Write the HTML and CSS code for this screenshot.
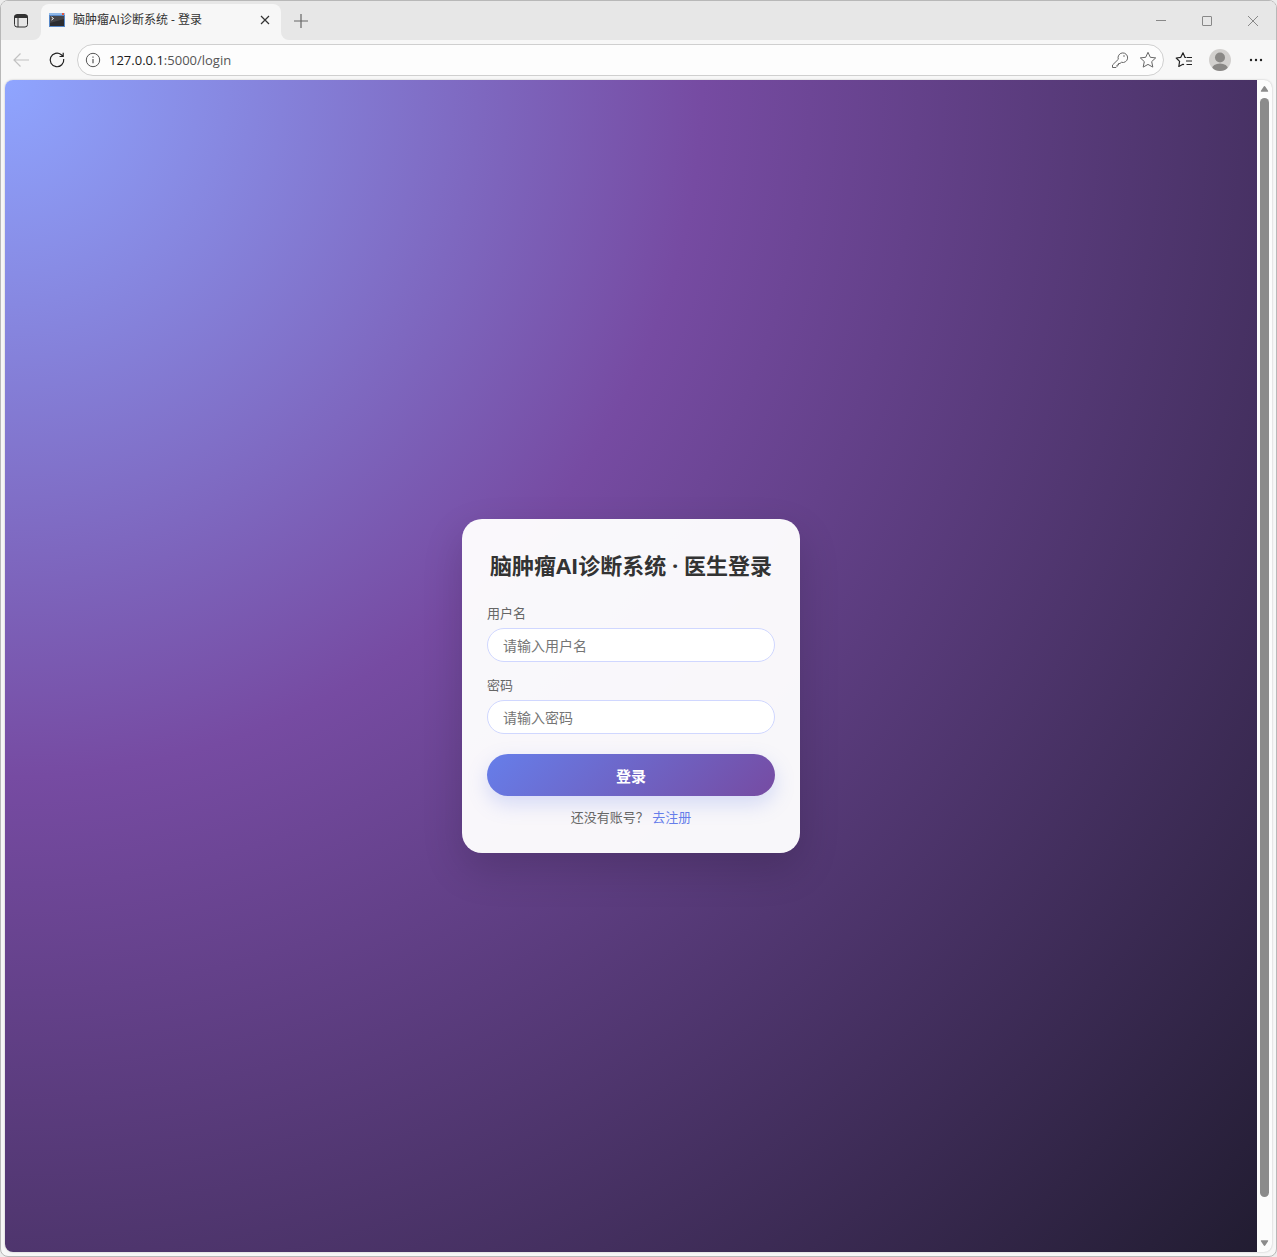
FILE: index.html
```html
<!DOCTYPE html>
<html lang="zh-CN">
<head>
<meta charset="utf-8">
<meta name="viewport" content="width=device-width, initial-scale=1">
<title>脑肿瘤AI诊断系统 - 登录</title>
<link rel="stylesheet" href="styles.css">
</head>
<body>
<div class="window">
  <header class="tabs">
    <button class="icon-btn tab-actions" type="button" aria-label="标签页操作">
      <svg width="16" height="16" viewBox="0 0 16 16" fill="none" stroke="#333"><rect x="1.5" y="1.5" width="13" height="12.5" rx="2.5"/><path d="M2 2.5h12v2H2z" fill="#333"/><path d="M5 5v9"/></svg>
    </button>
    <div class="tab">
      <svg width="16" height="16" viewBox="0 0 16 16"><path fill="#5788c8" d="M0 1h16v14H0z"/><path fill="#8fb8e8" d="M0 1h16v2H0z"/><path fill="#2d2d30" d="M1 4h14v10H1z"/><path fill="#464649" d="M1 4h14v3L1 11z"/><path fill="#e3573f" d="M13 1h2v2h-2z"/><path d="M2.500 5 4.500 6.500 2.500 8" fill="none" stroke="#fff"/></svg>
      <span class="tab-title">脑肿瘤AI诊断系统 - 登录</span>
      <button class="icon-btn" type="button" aria-label="关闭标签页">
        <svg width="16" height="16" viewBox="0 0 16 16" fill="none" stroke="#333" stroke-width="1.2"><path d="m4 4 8 8M12 4l-8 8"/></svg>
      </button>
    </div>
    <div class="strip">
      <button class="icon-btn new-tab" type="button" aria-label="新建标签页">
        <svg width="16" height="16" viewBox="0 0 16 16" fill="none" stroke="#666" stroke-width="1.2"><path d="M8 1v14M1 8h14"/></svg>
      </button>
      <div class="controls">
        <button class="icon-btn" type="button" aria-label="最小化"><svg width="12" height="12" viewBox="0 0 12 12" fill="none" stroke="#888"><path d="M1 5.500h10"/></svg></button>
        <button class="icon-btn" type="button" aria-label="最大化"><svg width="12" height="12" viewBox="0 0 12 12" fill="none" stroke="#888"><rect x="1.500" y="1.500" width="9" height="9" rx=".5"/></svg></button>
        <button class="icon-btn" type="button" aria-label="关闭"><svg width="12" height="12" viewBox="0 0 12 12" fill="none" stroke="#888"><path d="m1 1 10 10M11 1 1 11"/></svg></button>
      </div>
    </div>
  </header>
  <nav class="toolbar">
    <button class="icon-btn nav-btn" type="button" aria-label="后退" disabled>
      <svg width="18" height="18" viewBox="0 0 18 18" fill="none" stroke="#c2c2c2" stroke-width="1.2"><path d="M17 9H2M8.500 2.500 2 9l6.500 6.500"/></svg>
    </button>
    <button class="icon-btn nav-btn" type="button" aria-label="刷新">
      <svg width="18" height="18" viewBox="0 0 18 18" fill="none" stroke="#222" stroke-width="1.200"><path d="M15.700 8A6.800 6.800 0 1 1 13.300 3.700L15 5.300M15.200 1.800v3.700h-3.700"/></svg>
    </button>
    <div class="address">
      <svg width="16" height="16" viewBox="0 0 16 16" fill="none" stroke="#555"><circle cx="8" cy="8" r="6.700"/><path d="M8 7v4.300M8 4.500v1.300" stroke-width="1.200"/></svg>
      <span class="url"><span class="host">127.0.0.1</span>:5000/login</span>
      <button class="icon-btn" type="button" aria-label="密码">
        <svg width="18" height="18" viewBox="0 0 18 18" fill="none" stroke="#666" stroke-linejoin="round"><path d="M7.300 8.300a4.800 4.800 0 1 1 3.100 3L9 12.500H7.500V14H6v1.500L5 16.500H1.500V14z"/><circle cx="13" cy="5" r=".8" fill="#666" stroke="none"/></svg>
      </button>
      <button class="icon-btn" type="button" aria-label="收藏">
        <svg width="18" height="18" viewBox="0 0 18 18" fill="none" stroke="#666" stroke-linejoin="round"><path d="m9 1.300 2.300 5 5.400.6-4 3.700 1.100 5.500L9 13.400l-4.800 2.700 1.100-5.500-4-3.700 5.400-.6z"/></svg>
      </button>
    </div>
    <button class="icon-btn nav-btn" type="button" aria-label="收藏夹">
      <svg width="18" height="18" viewBox="0 0 18 18" fill="none" stroke="#222" stroke-width="1.200" stroke-linejoin="round"><path d="M11 6.500H10L8 1.800 5.800 6.300l-4.600.7 3.400 3.400L3.800 15.500l4.200-2.300 1 .6M11.500 6.500h5.500M11 10h6M11.500 13.500H17"/></svg>
    </button>
    <button class="icon-btn nav-btn" type="button" aria-label="个人资料">
      <svg width="24" height="24" viewBox="0 0 24 24"><defs><clipPath id="face"><circle cx="12" cy="12" r="11"/></clipPath></defs><circle cx="12" cy="12" r="11" fill="#d2d0ce"/><g clip-path="url(#face)" fill="#8a8886"><circle cx="12" cy="9.500" r="5"/><ellipse cx="12" cy="21" rx="8" ry="5.500"/></g></svg>
    </button>
    <button class="icon-btn nav-btn" type="button" aria-label="设置及其他">
      <svg width="16" height="16" viewBox="0 0 16 16" fill="#222"><circle cx="3" cy="8" r="1.200"/><circle cx="8" cy="8" r="1.200"/><circle cx="13" cy="8" r="1.200"/></svg>
    </button>
  </nav>
  <div class="viewport">
    <main class="page">
      <form class="card">
        <h1 class="title">脑肿瘤AI诊断系统 · 医生登录</h1>
        <div class="field">
          <label class="label" for="username">用户名</label>
          <input class="input" id="username" type="text" placeholder="请输入用户名">
        </div>
        <div class="field">
          <label class="label" for="password">密码</label>
          <input class="input" id="password" type="password" placeholder="请输入密码">
        </div>
        <button class="submit" type="submit">登录</button>
        <p class="hint">还没有账号？ <a class="link" href="/register">去注册</a></p>
      </form>
    </main>
    <div class="scrollbar">
      <svg width="9" height="8" viewBox="0 0 10 8" fill="#8b8b8b"><path d="M4 1.500Q5 0 6 1.500L9 6Q9.500 7 8.500 7h-7Q.5 7 1 6z"/></svg>
      <div class="track"><div class="thumb"></div></div>
      <svg width="9" height="8" viewBox="0 0 10 8" fill="#8b8b8b"><path d="M4 6.500Q5 8 6 6.500L9 2Q9.500 1 8.500 1h-7Q.5 1 1 2z"/></svg>
    </div>
  </div>
</div>
</body>
</html>
```

FILE: styles.css
```css
* {
  box-sizing: border-box;
}

body {
  margin: 0;
  background: #ececec;
  font-family: "Open Sans", "Noto Sans CJK SC", sans-serif;
}

.window {
  display: flex;
  flex-direction: column;
  height: 100vh;
  border: 1px solid #b8b8b8;
  border-radius: 8px;
  background: #f7f7f7;
  overflow: hidden;
}

.icon-btn {
  display: flex;
  align-items: center;
  justify-content: center;
  padding: 0;
  border: 0;
  background: none;
}

/* Tab strip */
.tabs {
  display: flex;
  flex: none;
  height: 39px;
  background: linear-gradient(#e7e7e7 50%, #f7f7f7 50%);
}

.tab-actions,
.new-tab {
  width: 40px;
}

.tab-actions {
  background: #e7e7e7;
  border-bottom-right-radius: 8px;
}

.strip {
  display: flex;
  flex: 1;
  border-bottom-left-radius: 8px;
  background: #e7e7e7;
}

.tab {
  display: flex;
  align-items: center;
  gap: 8px;
  width: 240px;
  margin-top: 3px;
  padding: 0 8px 4px;
  border-radius: 8px 8px 0 0;
  background: #f7f7f7;
}

.tab-title {
  flex: 1;
  color: #333;
  font-size: 12px;
  line-height: 16px;
  white-space: nowrap;
}

.controls {
  display: flex;
  margin-left: auto;
}

.controls .icon-btn {
  width: 46px;
}

/* Navigation bar */
.toolbar {
  display: flex;
  flex: none;
  align-items: center;
  height: 40px;
  padding: 0 2px;
}

.nav-btn {
  width: 36px;
  height: 32px;
}

.address {
  display: flex;
  flex: 1;
  align-items: center;
  gap: 8px;
  height: 32px;
  margin: 0 2px;
  padding: 0 5px 0 7px;
  border: 1px solid #cfcfcf;
  border-radius: 16px;
  background: #fdfdfd;
}

.address .icon-btn {
  width: 20px;
}

.url {
  flex: 1;
  color: #555;
  font-size: 13px;
  line-height: 20px;
}

.host {
  color: #1b1b1b;
}

/* Web page area */
.viewport {
  display: flex;
  flex: 1;
  min-height: 0;
  margin: 0 4px 4px;
  border-radius: 8px;
  background: #fcfcfc;
  box-shadow: 0 0 2px rgba(0, 0, 0, 0.25);
  overflow: hidden;
}

.page {
  display: flex;
  flex: 1;
  align-items: center;
  justify-content: center;
  height: calc(100% + 40px);
  background: radial-gradient(circle at top left, #8fa5ff 0, #764ba2 40%, #1f1b2e 100%);
}

.scrollbar {
  display: flex;
  flex: none;
  flex-direction: column;
  align-items: center;
  width: 15px;
  padding: 5px 0;
}

.track {
  flex: 1;
  width: 9px;
  padding: 5px 0;
}

.thumb {
  height: 96.7%;
  border-radius: 5px;
  background: #8b8b8b;
}

/* Login card */
.card {
  width: 338px;
  padding: 31px 25px 26px;
  border-radius: 20px;
  background: rgba(255, 255, 255, 0.96);
  box-shadow: 0 16px 40px rgba(0, 0, 0, 0.16);
}

.title {
  margin: 0 0 24px;
  color: #333;
  font-size: 22px;
  line-height: 30px;
  text-align: center;
  white-space: nowrap;
}

.field {
  margin-bottom: 14px;
}

.label {
  display: block;
  margin-bottom: 6px;
  color: #666;
  font-size: 13px;
  line-height: 18px;
}

.input {
  display: block;
  width: 100%;
  height: 34px;
  padding: 0 15px;
  border: 1px solid #d0d7ff;
  border-radius: 17px;
  background: #fff;
  color: #333;
  font: inherit;
  font-size: 14px;
}

.input::placeholder {
  color: #757575;
}

.submit {
  display: block;
  width: 100%;
  height: 42px;
  margin-top: 20px;
  border: 0;
  border-radius: 21px;
  background: linear-gradient(135deg, #667eea, #764ba2);
  box-shadow: 0 8px 20px rgba(102, 126, 234, 0.25);
  color: #fff;
  font: inherit;
  font-size: 15px;
  font-weight: 700;
}

.hint {
  margin: 11px 0 0;
  color: #666;
  font-size: 13px;
  line-height: 20px;
  text-align: center;
}

.link {
  color: #667eea;
  text-decoration: none;
}
```
